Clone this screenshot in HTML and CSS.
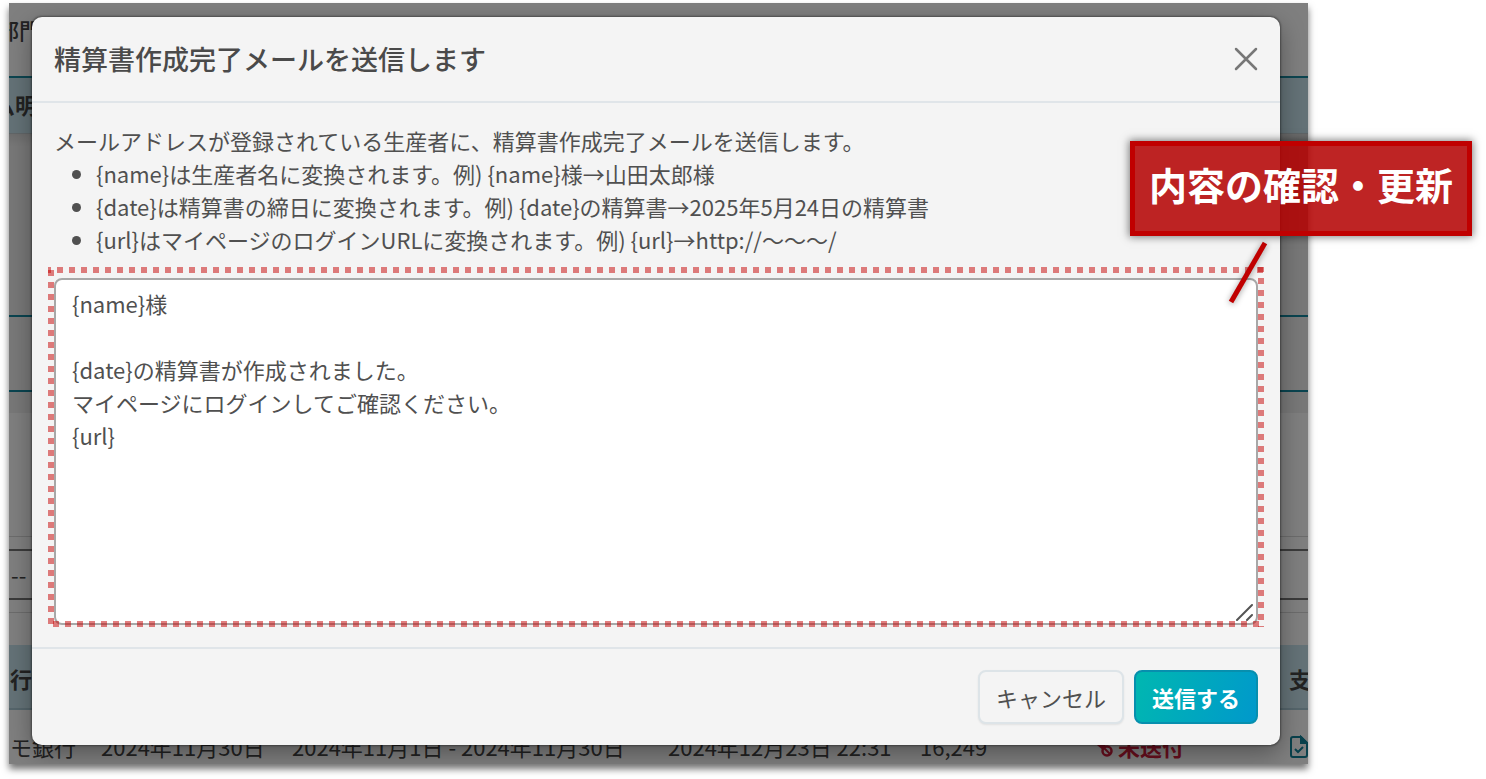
FILE: index.html
```html
<!DOCTYPE html>
<html lang="ja">
<head>
<meta charset="utf-8">
<title>精算書作成完了メールを送信します</title>
<link rel="stylesheet" href="styles.css">
</head>
<body>
<main class="stage">
  <div class="frame">
    <div class="page" aria-hidden="true">
      <div class="page-top">部門</div>
      <div class="page-band">ム明</div>
      <div class="page-panel"></div>
      <div class="page-line"></div>
      <div class="page-gap"></div>
      <div class="page-space"></div>
      <div class="page-filter"><select class="page-select" aria-label="絞り込み" tabindex="-1"><option>--</option></select></div>
      <table class="page-table">
        <colgroup><col class="c-bank"><col class="c-date"><col class="c-term"><col class="c-time"><col class="c-sum"><col class="c-state"><col></colgroup>
        <thead><tr><th>行</th><th></th><th></th><th></th><th></th><th></th><th>支</th></tr></thead>
        <tbody><tr>
          <td>モ銀行</td><td>2024年11月30日</td><td>2024年11月1日 - 2024年11月30日</td><td>2024年12月23日 22:31</td><td>16,249</td>
          <td><span class="unsent"><svg width="22" height="22" viewBox="0 0 22 22"><path d="M0 5h16l-5 9z" fill="currentColor"/><circle cx="15" cy="15" r="4.500" fill="none" stroke="currentColor" stroke-width="2.500"/><path d="M12 12l6 6" stroke="currentColor" stroke-width="2"/></svg>未送付</span></td>
          <td><svg class="doc" width="20" height="24" viewBox="0 0 20 24" fill="none" stroke="currentColor" stroke-width="2"><path d="M12 2H4Q2 2 2 4v16q0 2 2 2h12q2 0 2-2V8z"/><path d="M12 2v6h6z" fill="currentColor"/><path d="M6 14l3 3 5-5"/></svg></td>
        </tr></tbody>
      </table>
    </div>
    <div class="overlay">
      <section class="modal" role="dialog" aria-labelledby="modal-title">
        <header class="modal-header">
          <h1 class="modal-title" id="modal-title">精算書作成完了メールを送信します</h1>
          <button class="close" type="button" aria-label="閉じる"><svg width="24" height="24" viewBox="0 0 24 24" fill="none" stroke="currentColor" stroke-width="2.5" stroke-linecap="round"><path d="M2 2l20 20M22 2L2 22"/></svg></button>
        </header>
        <div class="modal-body">
          <label for="message">メールアドレスが登録されている生産者に、精算書作成完了メールを送信します。</label>
          <ul class="hints">
            <li>{name}は生産者名に変換されます。例) {name}様→山田太郎様</li>
            <li>{date}は精算書の締日に変換されます。例) {date}の精算書→2025年5月24日の精算書</li>
            <li>{url}はマイページのログインURLに変換されます。例) {url}→http://～～～/</li>
          </ul>
          <div class="field">
            <textarea class="message" id="message" rows="10">{name}様

{date}の精算書が作成されました。
マイページにログインしてご確認ください。
{url}</textarea>
            <svg class="grip" width="18" height="18" viewBox="0 0 18 18" fill="none" stroke="#555" stroke-width="2" stroke-linecap="round"><path d="M1 17L16 2M11 17l5-5"/></svg>
            <div class="highlight"></div>
          </div>
        </div>
        <footer class="modal-footer">
          <button class="btn btn-plain" type="button">キャンセル</button>
          <button class="btn btn-primary" type="button">送信する</button>
        </footer>
      </section>
    </div>
    <svg class="leader" width="46" height="70" viewBox="0 0 46 70"><path d="M40 5L6 64" stroke="#c00000" stroke-width="5"/></svg>
    <div class="callout">内容の確認・更新</div>
  </div>
</main>
</body>
</html>
```

FILE: styles.css
```css
* { box-sizing: border-box; }
body {
  margin: 0;
  background: #fff;
  color: #505050;
  font: 22px/33px "Noto Sans CJK JP", sans-serif;
}
button, textarea, select { font: inherit; color: inherit; }
.stage { padding: 3px 178px 15px 9px; }
.frame {
  position: relative;
  box-shadow: 0 5px 7px rgba(0, 0, 0, .55);
}

/* page behind the dialog */
.page {
  position: absolute;
  inset: 0;
  overflow: hidden;
  background: #fff;
  color: #444;
  white-space: nowrap;
}
.page-top { height: 73px; padding-top: 10px; text-indent: -12px; font-weight: 500; }
.page-band {
  height: 58px;
  padding-top: 10px;
  border-top: 2px solid #1a8ba0;
  border-bottom: 1px solid #c2cdd0;
  background: #c9e4ee;
  font-weight: 700;
  text-indent: -16px;
}
.page-panel { height: 181px; background: linear-gradient(#dcdcdc, #f0f0f0 12px); }
.page-line {
  height: 77px;
  border: solid #1489a0;
  border-width: 2px 0;
  background: #f2f2f2;
}
.page-gap { height: 21px; background: #f0f0f0; }
.page-space { height: 123px; }
.page-filter {
  height: 77px;
  padding: 12px 0;
  border: solid #d8d8d8;
  border-width: 1px 0;
}
.page-select {
  display: block;
  width: 100%;
  height: 51px;
  padding: 0 2px;
  border: solid #777;
  border-width: 2px 0;
  background: #fff;
  appearance: none;
}
.page-table {
  width: 100%;
  margin-top: 32px;
  border-collapse: collapse;
  table-layout: fixed;
}
.page-table th, .page-table td { padding: 0; text-align: left; }
.page-table th {
  height: 64px;
  padding-top: 4px;
  background: #c9e4ee;
  border-bottom: 2px solid #aacbd6;
}
.page-table td { height: 74px; }
.page-table tr > :first-child { padding-left: 1px; }
.c-bank { width: 92px; }
.c-date { width: 191px; }
.c-term { width: 376px; }
.c-time { width: 252px; }
.c-sum { width: 172px; }
.c-state { width: 197px; }
.unsent { display: flex; align-items: center; gap: 4px; color: #d01c3a; font-weight: 700; }
.doc { display: block; color: #128299; }

/* dialog */
.overlay {
  position: relative;
  padding: 14px 28px 19px 23px;
  background: rgba(0, 0, 0, .5);
  overflow: hidden;
}
.modal {
  border-radius: 10px;
  background: #f4f4f4;
  box-shadow: 0 0 2px 1px rgba(0, 0, 0, .35), 0 8px 24px rgba(0, 0, 0, .35);
}
.modal-header {
  display: flex;
  align-items: center;
  justify-content: space-between;
  min-height: 86px;
  padding: 0 22px;
  border-bottom: 2px solid #e0e5e9;
}
.modal-title { margin: 0; font-size: 27px; font-weight: 500; line-height: 40px; color: #4a4a4a; }
.close { display: flex; padding: 0; border: 0; background: none; color: #777; }
.modal-body { padding: 21px 22px 22px; }
.modal-body > label { display: block; }
.hints { margin: 0 0 22px; padding-left: 42px; }
.field { position: relative; }
.message {
  display: block;
  width: 100%;
  padding: 7px 16px 6px;
  border: 2px solid #a8a8a8;
  border-radius: 8px;
  background: #fff;
  outline: 0;
  resize: none;
}
.grip { position: absolute; right: 4px; bottom: 4px; }
.highlight {
  --dash: rgba(196, 0, 0, .5);
  position: absolute;
  inset: -11px -6px -2px;
  pointer-events: none;
  background:
    linear-gradient(90deg, var(--dash) 50%, transparent 50%) 9px 0 / 12px 6px repeat-x,
    linear-gradient(90deg, var(--dash) 50%, transparent 50%) 5px 100% / 12px 6px repeat-x,
    linear-gradient(var(--dash) 50%, transparent 50%) 0 3px / 6px 12px repeat-y,
    linear-gradient(var(--dash) 50%, transparent 50%) 100% 11px / 6px 12px repeat-y;
}
.modal-footer {
  display: flex;
  justify-content: flex-end;
  gap: 10px;
  padding: 21px 22px;
  border-top: 2px solid #e0e5e9;
}
.btn { height: 54px; padding: 0 16px; border: 2px solid; border-radius: 8px; }
.btn-plain { border-color: #dde4e8; background: #f4f4f4; box-shadow: 0 1px 2px rgba(0, 0, 0, .08); }
.btn-primary {
  border-color: #078fae;
  background: linear-gradient(110deg, #00b8b0, #0098cc) border-box;
  color: #fff;
  font-weight: 700;
}

/* annotation */
.callout {
  position: absolute;
  top: 138px;
  left: calc(100% - 178px);
  padding: 9px 14px 19px;
  border: 5px solid #c00000;
  background: rgba(179, 0, 0, .86) padding-box;
  box-shadow: 0 0 8px 1px rgba(0, 0, 0, .5);
  color: #fff;
  font-size: 38px;
  font-weight: 700;
  line-height: 57px;
  white-space: nowrap;
}
.leader {
  position: absolute;
  top: 235px;
  left: calc(100% - 83px);
  filter: drop-shadow(0 1px 3px rgba(0, 0, 0, .4));
}
```
